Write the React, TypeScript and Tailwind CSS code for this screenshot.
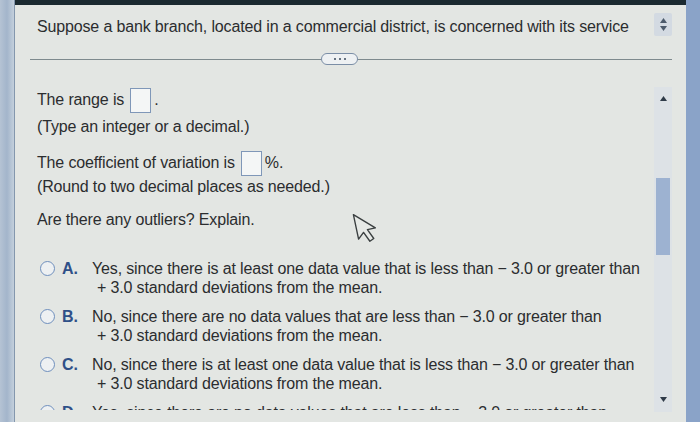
const FONT = '"Liberation Sans", Arial, sans-serif';

const options = [
  {
    key: "A",
    line1: "Yes, since there is at least one data value that is less than \u2212 3.0 or greater than",
    line2: "+ 3.0 standard deviations from the mean.",
  },
  {
    key: "B",
    line1: "No, since there are no data values that are less than \u2212 3.0 or greater than",
    line2: "+ 3.0 standard deviations from the mean.",
  },
  {
    key: "C",
    line1: "No, since there is at least one data value that is less than \u2212 3.0 or greater than",
    line2: "+ 3.0 standard deviations from the mean.",
  },
  {
    key: "D",
    line1: "Yes, since there are no data values that are less than \u2212 3.0 or greater than",
    line2: "+ 3.0 standard deviations from the mean.",
  },
];

const AnswerBox = () => (
  <span className="ml-[6px] mr-[3px] inline-block h-[25px] w-[21px] border border-[#7f97b8] bg-[#f4f6f6]" />
);

const Cursor = () => (
  <svg
    className="absolute left-[354px] top-[209px] rotate-[-12deg]"
    width="30"
    height="38"
    viewBox="0 0 24 30"
  >
    <path
      d="M2 2 L2 22 L7 17.5 L10.5 25.5 L14 24 L10.5 16 L17 16 Z"
      fill="#e6e9e6"
      stroke="#3a3f40"
      strokeWidth="1.1"
      strokeLinejoin="round"
    />
  </svg>
);

export default function App() {
  return (
    <div
      className="relative flex h-[422px] w-[700px] overflow-hidden bg-[#e3e6e3] text-[16px] tracking-[-0.15px] text-[#2b2d2f]"
      style={{ fontFamily: FONT }}
    >
      {/* left window edge */}
      <div className="w-[15px] shrink-0 border-r border-[#8497ad] bg-gradient-to-r from-[#b5c3d4] via-[#a3b5cb] to-[#c4d0dc]" />

      <div className="flex min-w-0 flex-1 flex-col">
        <div className="h-[5px] shrink-0 bg-[#1b2a30]" />

        {/* question header */}
        <div className="flex h-[44px] shrink-0 items-start justify-between pl-[22px] pr-[14px] pt-[12px]">
          <div className="leading-[20px]">
            Suppose a bank branch, located in a commercial district, is concerned with its service
          </div>
          <div className="mt-[-4px] flex h-[23px] w-[18px] flex-col items-center justify-center gap-[3px] rounded-[2px] bg-[#d3dae2]">
            <svg width="7" height="5" viewBox="0 0 7 5">
              <path d="M0 5 L3.5 0 L7 5 Z" fill="#4c5a6b" />
            </svg>
            <svg width="7" height="5" viewBox="0 0 7 5">
              <path d="M0 0 L3.5 5 L7 0 Z" fill="#4c5a6b" />
            </svg>
          </div>
        </div>

        {/* divider with expand pill */}
        <div className="relative ml-[15px] mr-[14px] flex h-[20px] shrink-0 items-center">
          <div className="h-px flex-1 bg-[#7e8a8e]" />
          <div className="absolute left-[291px] top-[4px] flex h-[12px] w-[37px] items-center justify-center gap-[3px] rounded-full border-[1.5px] border-[#7b8ea6] bg-[#eef1f3]">
            <span className="h-[2px] w-[2px] rounded-full bg-[#3b4a5c]" />
            <span className="h-[2px] w-[2px] rounded-full bg-[#3b4a5c]" />
            <span className="h-[2px] w-[2px] rounded-full bg-[#3b4a5c]" />
          </div>
        </div>

        {/* answer area */}
        <div className="mt-[18px] flex min-h-0 flex-1">
          <div className="h-[323px] min-w-0 flex-1 overflow-hidden pl-[22px]">
            <div className="flex h-[26px] items-center">
              The range is
              <AnswerBox />.
            </div>
            <div className="mt-[3px] leading-[22px]">(Type an integer or a decimal.)</div>

            <div className="mt-[12px] flex h-[26px] items-center">
              The coefficient of variation is
              <AnswerBox />%.
            </div>
            <div className="leading-[22px]">(Round to two decimal places as needed.)</div>

            <div className="mt-[11px] leading-[22px]">Are there any outliers? Explain.</div>

            <div className="mt-[28px] flex flex-col gap-[10px]">
              {options.map((o) => (
                <div key={o.key} className="flex items-start leading-[19px]">
                  <span className="ml-[3px] mt-[2px] h-[15px] w-[15px] shrink-0 rounded-full border-[1.5px] border-[#6f8fbd] bg-[#edf0f2]" />
                  <span className="ml-[7px] w-[30px] shrink-0 font-bold text-[#2f5088]">{o.key}.</span>
                  <div>
                    <div>{o.line1}</div>
                    <div className="pl-[5px]">{o.line2}</div>
                  </div>
                </div>
              ))}
            </div>
          </div>

          {/* inner scrollbar */}
          <div className="mb-[10px] mr-[14px] flex w-[18px] shrink-0 flex-col items-center bg-[#dde2e6] pt-[9px]">
            <svg width="7" height="5" viewBox="0 0 7 5">
              <path d="M0 5 L3.5 0 L7 5 Z" fill="#2f3b48" />
            </svg>
            <div className="mt-[77px] h-[77px] w-[14px] bg-[#9db2d1]" />
            <div className="flex-1" />
            <svg className="mb-[10px]" width="7" height="5" viewBox="0 0 7 5">
              <path d="M0 0 L3.5 5 L7 0 Z" fill="#2f3b48" />
            </svg>
          </div>
        </div>
      </div>

      {/* right window edge */}
      <div className="w-[14px] shrink-0 bg-[#8aa3c8]" />

      <Cursor />
    </div>
  );
}
